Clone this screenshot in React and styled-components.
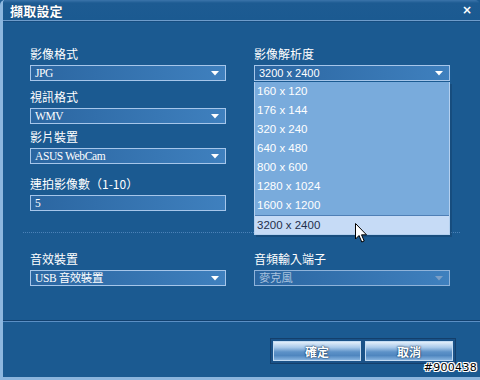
import React from "react";
import styled, { createGlobalStyle } from "styled-components";

const GlobalStyle = createGlobalStyle`
  html, body { margin: 0; padding: 0; background: #1b5a91; }
  body { font-family: "Noto Sans CJK TC", "Liberation Sans", sans-serif; }
`;

const resolutions = [
  "160 x 120",
  "176 x 144",
  "320 x 240",
  "640 x 480",
  "800 x 600",
  "1280 x 1024",
  "1600 x 1200",
  "3200 x 2400",
];

function Arrow({ disabled }) {
  return (
    <ArrowIcon width="8" height="5" viewBox="0 0 8 5">
      <path d="M0 0 H8 L4 4.5 Z" fill={disabled ? "#7c9fc6" : "#ffffff"} />
    </ArrowIcon>
  );
}

function Select({ value, disabled, sans, noArrow }) {
  return (
    <SelectBox disabled={disabled}>
      <SelectValue sans={sans} disabled={disabled}>{value}</SelectValue>
      {!noArrow && <Arrow disabled={disabled} />}
    </SelectBox>
  );
}

function Field({ label, top, children }) {
  return (
    <FieldBox top={top}>
      <Label>{label}</Label>
      {children}
    </FieldBox>
  );
}

function Cursor() {
  return (
    <CursorIcon width="13" height="20" viewBox="0 0 13 20">
      <path
        d="M0.5 0.5 L0.5 16 L4 12.5 L6.8 19 L9.2 18 L6.5 11.8 L11.5 11.8 Z"
        fill="#ffffff"
        stroke="#000000"
        strokeWidth="1"
        strokeLinejoin="miter"
      />
    </CursorIcon>
  );
}

export default function App() {
  return (
    <>
      <GlobalStyle />
      <Window>
        <TitleBar>
          <Title>擷取設定</Title>
          <Close>×</Close>
        </TitleBar>
        <Body>
          <Columns>
            <Column>
              <Field label="影像格式" top={25}>
                <Select value="JPG" />
              </Field>
              <Field label="視訊格式" top={8}>
                <Select value="WMV" />
              </Field>
              <Field label="影片裝置" top={5}>
                <Select value="ASUS WebCam" />
              </Field>
              <Field label="連拍影像數（1-10）" top={12}>
                <Select value="5" noArrow />
              </Field>
            </Column>
            <Column>
              <Field label="影像解析度" top={25}>
                <DropWrap>
                  <Select value="3200 x 2400" sans />
                  <DropList>
                    {resolutions.map((r, i) => (
                      <DropItem key={r} selected={i === resolutions.length - 1}>
                        {r}
                      </DropItem>
                    ))}
                    <Cursor />
                  </DropList>
                </DropWrap>
              </Field>
            </Column>
          </Columns>
          <Dotted />
          <Columns>
            <Field label="音效裝置" top={18}>
              <Select value="USB 音效裝置" />
            </Field>
            <Field label="音頻輸入端子" top={18}>
              <Select value="麥克風" disabled />
            </Field>
          </Columns>
          <Rule />
          <ButtonRow>
            <ButtonFrame>
              <Button>確定</Button>
              <Button>取消</Button>
            </ButtonFrame>
          </ButtonRow>
          <Watermark>#900438</Watermark>
        </Body>
      </Window>
    </>
  );
}

const Window = styled.div`
  position: relative;
  width: 480px;
  height: 380px;
  box-sizing: border-box;
  background: #1b5a91;
  border-left: 3px solid #8db7df;
  border-bottom: 3px solid #8cb5dd;
  border-radius: 5px 5px 0 0;
  display: flex;
  flex-direction: column;
  overflow: hidden;
`;

const TitleBar = styled.div`
  height: 20px;
  display: flex;
  align-items: center;
  justify-content: space-between;
  padding: 0 8px 0 7px;
  background: linear-gradient(#3b74aa 0, #1d5b92 3px, #1b5a91 100%);
  border-bottom: 1px solid #6e9ccb;
  box-shadow: 0 1px 0 #174d80;
`;

const Title = styled.span`
  color: #ffffff;
  font-weight: bold;
  font-size: 13px;
  letter-spacing: 0.2px;
  text-shadow: 0 0 1px #0c2e52;
`;

const Close = styled.span`
  color: #ffffff;
  font-family: "DejaVu Sans", sans-serif;
  font-weight: bold;
  font-size: 12px;
`;

const Body = styled.div`
  flex: 1;
  display: flex;
  flex-direction: column;
`;

const Columns = styled.div`
  display: grid;
  grid-template-columns: 196px 196px;
  column-gap: 28px;
  padding: 0 27px;
`;

const Column = styled.div`
  display: flex;
  flex-direction: column;
`;

const FieldBox = styled.div`
  display: flex;
  flex-direction: column;
  margin-top: ${(p) => p.top}px;
`;

const Label = styled.div`
  height: 16px;
  line-height: 16px;
  margin-bottom: 3px;
  color: #ffffff;
  font-size: 12px;
  white-space: nowrap;
`;

const SelectBox = styled.div`
  height: 16px;
  box-sizing: border-box;
  display: flex;
  align-items: center;
  justify-content: space-between;
  padding: 0 6px 0 4px;
  border: 1px solid ${(p) => (p.disabled ? "#8fb3da" : "#a6c6ea")};
  background: linear-gradient(to right, #2b66a1, #3f80be);
`;

const SelectValue = styled.span`
  color: ${(p) => (p.disabled ? "#a9c2de" : "#ffffff")};
  font-family: ${(p) =>
    p.sans
      ? `"Liberation Sans", sans-serif`
      : `"Liberation Serif", "Noto Sans CJK TC", serif`};
  font-size: ${(p) => (p.sans ? "11px" : "11.5px")};
  letter-spacing: ${(p) => (p.sans ? "0" : "-0.4px")};
  line-height: 14px;
  white-space: nowrap;
`;

const ArrowIcon = styled.svg`
  display: block;
  margin-top: 1px;
`;

const DropWrap = styled.div`
  position: relative;
`;

const DropList = styled.div`
  position: absolute;
  top: 17px;
  left: 0;
  width: 196px;
  box-sizing: border-box;
  border: 1px solid #b4d0ef;
  border-top: none;
  background: #79abdc;
  display: flex;
  flex-direction: column;
  z-index: 2;
  box-shadow: 2px 2px 0 rgba(10, 40, 70, 0.25);
`;

const DropItem = styled.div`
  height: 19px;
  line-height: 19px;
  padding-left: 2px;
  font-family: "Liberation Sans", sans-serif;
  font-size: 11.5px;
  color: ${(p) => (p.selected ? "#1f2f4c" : "#ffffff")};
  background: ${(p) => (p.selected ? "#c6dbf6" : "transparent")};
  border-top: ${(p) => (p.selected ? "1px solid #4f7fb6" : "none")};
  box-sizing: border-box;
`;

const CursorIcon = styled.svg`
  position: absolute;
  left: 100px;
  top: 141px;
`;

const Dotted = styled.div`
  margin: 21px 20px 0;
  height: 0;
  border-top: 1px dotted #4c82b8;
`;

const Rule = styled.div`
  margin-top: 34px;
  height: 0;
  border-top: 1px solid #12406e;
  border-bottom: 1px solid #5b8fc4;
`;

const ButtonRow = styled.div`
  display: flex;
  justify-content: flex-end;
  padding: 16px 24px 0 0;
`;

const ButtonFrame = styled.div`
  display: flex;
  gap: 4px;
  padding: 2px;
  border: 1px solid #143f6b;
  background: #1a5288;
`;

const Button = styled.div`
  width: 88px;
  height: 20px;
  box-sizing: border-box;
  display: flex;
  align-items: center;
  justify-content: center;
  border: 1px solid #c4dcf3;
  background: linear-gradient(
    #e2eefa 0%,
    #a9c9ea 30%,
    #5d92c8 55%,
    #4f86bf 75%,
    #86b3df 100%
  );
  color: #ffffff;
  font-size: 12px;
  font-weight: bold;
  text-shadow: 0 0 2px #0e3158, 0 0 1px #0e3158;
`;

const Watermark = styled.div`
  position: absolute;
  right: 3px;
  bottom: 3px;
  font-family: "DejaVu Sans", sans-serif;
  font-size: 11px;
  color: #000000;
  letter-spacing: 0.3px;
  text-shadow: 1px 0 0 #fff, -1px 0 0 #fff, 0 1px 0 #fff, 0 -1px 0 #fff,
    1px 1px 0 #fff, -1px -1px 0 #fff, 1px -1px 0 #fff, -1px 1px 0 #fff;
`;
